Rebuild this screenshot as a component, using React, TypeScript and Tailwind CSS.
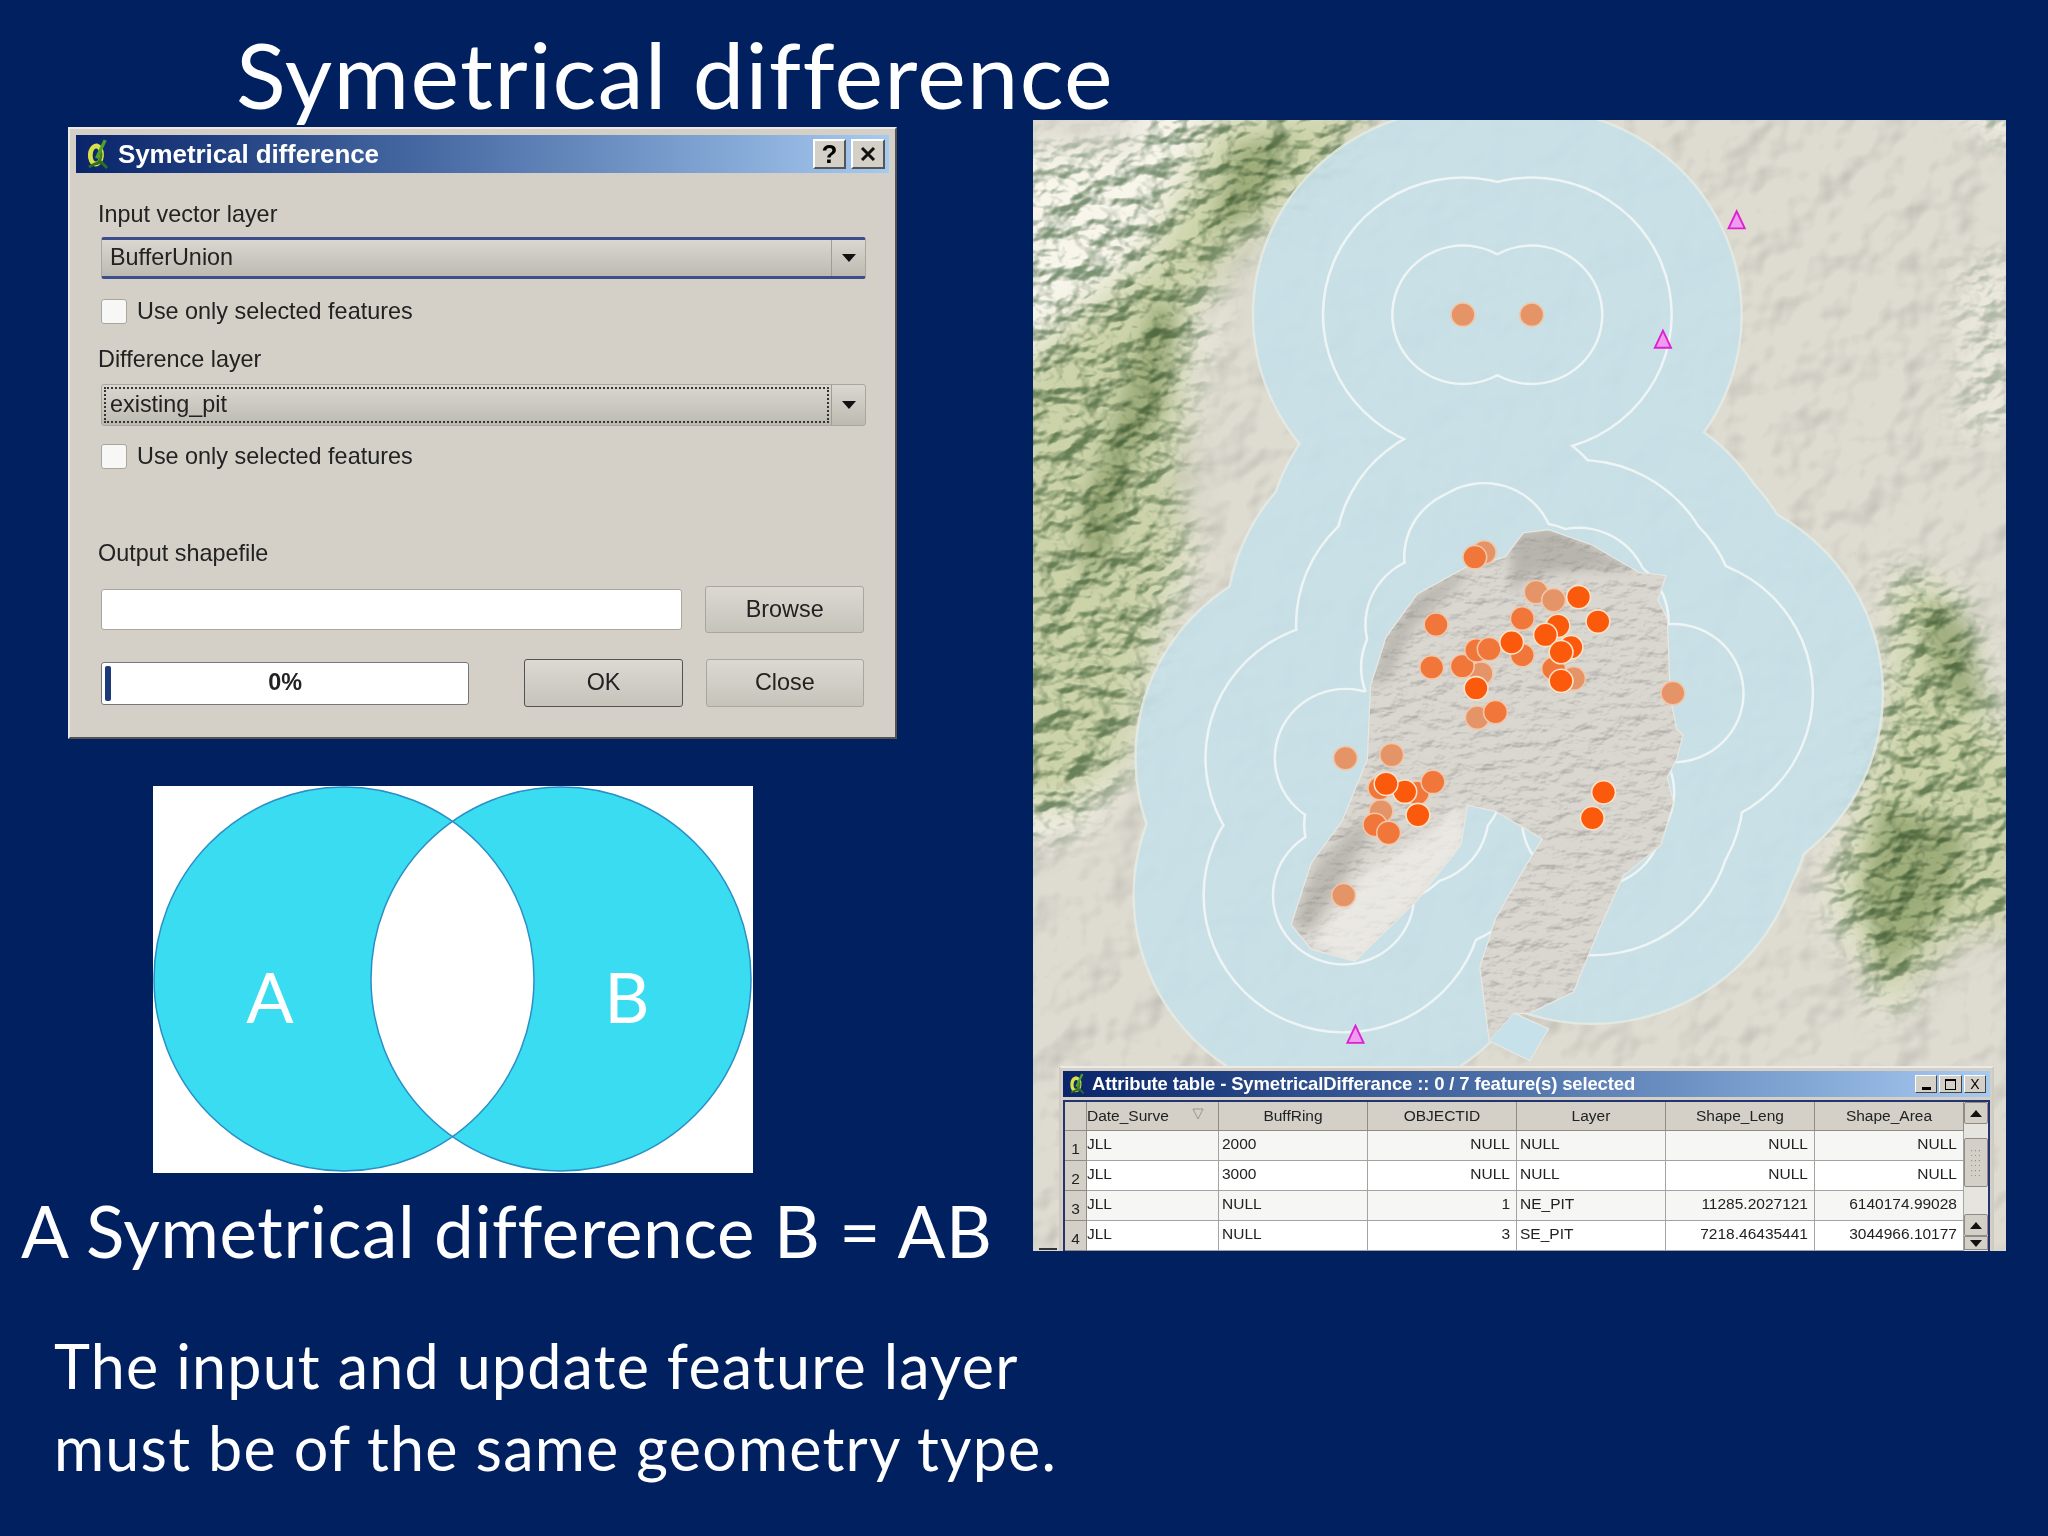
const dots: [number, number, number][] = [
  [693, 334, 0], [803, 334, 0], [727, 722, 0], [712, 730, 1], [810, 787, 0], [838, 800, 0],
  [1029, 952, 0], [505, 1058, 0], [579, 1053, 0], [502, 1282, 0], [562, 1145, 0], [716, 992, 0],
  [722, 920, 0], [650, 840, 1], [643, 910, 1], [692, 908, 1], [715, 882, 1], [735, 880, 1],
  [788, 830, 1], [788, 890, 1], [838, 912, 1], [870, 928, 0], [745, 983, 1], [560, 1107, 1],
  [620, 1115, 1], [552, 1167, 1], [574, 1180, 1], [645, 1097, 1], [878, 795, 2], [909, 835, 2],
  [845, 842, 2], [825, 857, 2], [771, 869, 2], [866, 877, 2], [850, 885, 2], [850, 932, 2],
  [714, 944, 2], [600, 1113, 2], [570, 1100, 2], [621, 1151, 2], [918, 1114, 2], [900, 1156, 2],
];

const PIT =
  "M790 690 L830 685 L900 710 L975 755 L1018 760 L1005 800 L1020 830 L1025 960 L1035 1010 L1045 1020 L1035 1060 L1020 1090 L1030 1130 L1010 1200 L950 1250 L910 1340 L870 1440 L800 1475 L775 1475 L735 1520 L720 1400 L745 1320 L790 1240 L820 1190 L745 1145 L700 1135 L690 1200 L620 1290 L520 1390 L450 1370 L418 1330 L450 1230 L500 1160 L540 1060 L545 940 L570 860 L620 790 L700 745 L760 730 Z";

const rows = [
  ["JLL", "2000", "NULL", "NULL", "NULL", "NULL"],
  ["JLL", "3000", "NULL", "NULL", "NULL", "NULL"],
  ["JLL", "NULL", "1", "NE_PIT", "11285.2027121", "6140174.99028"],
  ["JLL", "NULL", "3", "SE_PIT", "7218.46435441", "3044966.10177"],
];
const headers = ["Date_Surve", "BuffRing", "OBJECTID", "Layer", "Shape_Leng", "Shape_Area"];
const rightAligned = [false, false, true, false, true, true];

function QgisIcon({ className }: { className: string }) {
  return (
    <svg viewBox="0 0 24 32" className={className}>
      <path d="M11 7 C3 8 2 24 10 26 C17 26 19 9 11 7 Z" fill="none" stroke="#d9e04a" strokeWidth="5" />
      <path d="M15 12 C17 17 15 23 11 26" fill="none" stroke="#3d7d24" strokeWidth="3" />
      <path d="M20 1 L11 20" stroke="#4f9f2c" strokeWidth="3.5" />
      <path d="M3 29 L9 26 L16 24 L22 30" fill="none" stroke="#2f6e1e" strokeWidth="3" />
    </svg>
  );
}

function Arrow() {
  return (
    <svg viewBox="0 0 14 8" className="w-[14px] h-[8px]">
      <polygon points="0,0 14,0 7,8" fill="#111" />
    </svg>
  );
}

function CloseMark({ className }: { className: string }) {
  return (
    <svg viewBox="0 0 16 14" className={className}>
      <path d="M2 1 L14 13 M14 1 L2 13" stroke="#111" strokeWidth="3" />
    </svg>
  );
}

function Combo({ text, focus, hot }: { text: string; focus?: boolean; hot?: boolean }) {
  return (
    <div
      className={`h-[42px] w-[765px] flex rounded-[3px] border bg-gradient-to-b from-[#dad7d0] to-[#bdbab2] ${
        hot ? "border-[#a9a69e] border-y-[3px] border-y-[#3d4c8c]" : "border-[#a9a69e]"
      }`}
    >
      <div className="flex-1 p-[2px] flex">
        <div
          className={`flex-1 flex items-center pl-[4px] ${focus ? "border-2 border-dotted border-[#333]" : "pl-[6px]"}`}
        >
          {text}
        </div>
      </div>
      <div className="w-[34px] border-l border-[#a09d95] flex items-center justify-center">
        <Arrow />
      </div>
    </div>
  );
}

function Check({ label }: { label: string }) {
  return (
    <div className="flex items-center h-[25px] gap-[10px]">
      <div className="w-[26px] h-[25px] bg-[#f7f7f5] border border-[#a9a69e] rounded-[3px]" />
      <span>{label}</span>
    </div>
  );
}

function Btn({ text, dark, className }: { text: string; dark?: boolean; className?: string }) {
  return (
    <div
      className={`w-[159px] flex items-center justify-center rounded-[3px] border bg-gradient-to-b from-[#dcd9d2] to-[#c6c3bb] ${
        dark ? "border-[#55534f]" : "border-[#a9a69e]"
      } ${className ?? ""}`}
    >
      {text}
    </div>
  );
}

function Dialog() {
  return (
    <div className="w-[829px] h-[612px] bg-[#d4d0c8] border-2 border-t-[#eceae4] border-l-[#eceae4] border-r-[#55534f] border-b-[#55534f] blur-[0.5px] font-['Liberation_Sans',sans-serif] text-[23.4px] text-[#222] flex flex-col">
      <div className="mx-[6px] mt-[6px] h-[38px] flex items-center bg-gradient-to-r from-[#0a246a] to-[#a6caf0] pl-[10px] pr-[4px]">
        <QgisIcon className="w-[23px] h-[31px]" />
        <span className="ml-[9px] text-white font-bold text-[26px] tracking-[-0.1px] flex-1">Symetrical difference</span>
        <div className="w-[33px] h-[30px] bg-[#d4d0c8] border-2 border-b-[#555] border-r-[#555] border-t-white border-l-white flex items-center justify-center font-bold text-[26px] text-black">
          ?
        </div>
        <div className="ml-[5px] w-[34px] h-[30px] bg-[#d4d0c8] border-2 border-b-[#555] border-r-[#555] border-t-white border-l-white flex items-center justify-center">
          <CloseMark className="w-[16px] h-[14px]" />
        </div>
      </div>
      <div className="px-[31px] flex flex-col">
        <div className="mt-[27px] h-[30px] flex items-center -ml-[3px]">Input vector layer</div>
        <div className="mt-[7px]">
          <Combo text="BufferUnion" hot />
        </div>
        <div className="mt-[20px]">
          <Check label="Use only selected features" />
        </div>
        <div className="mt-[21px] h-[30px] flex items-center -ml-[3px]">Difference layer</div>
        <div className="mt-[9px]">
          <Combo text="existing_pit" focus />
        </div>
        <div className="mt-[18px]">
          <Check label="Use only selected features" />
        </div>
        <div className="mt-[70px] h-[30px] flex items-center -ml-[3px]">Output shapefile</div>
        <div className="mt-[17px] h-[47px] flex items-center gap-[23px]">
          <div className="w-[583px] h-[41px] bg-white border border-[#a9a69e] rounded-[3px]" />
          <Btn text="Browse" className="h-[47px]" />
        </div>
        <div className="mt-[26px] h-[48px] flex items-center">
          <div className="w-[370px] h-[43px] bg-white border border-[#777] rounded-[3px] relative flex items-center justify-center font-bold">
            <div className="absolute left-[3px] top-[3px] bottom-[3px] w-[6px] bg-[#1c3a7a] rounded-[2px]" />
            0%
          </div>
          <Btn text="OK" dark className="ml-[55px] h-[48px]" />
          <Btn text="Close" className="ml-[23px] h-[48px]" />
        </div>
      </div>
    </div>
  );
}

function Venn() {
  return (
    <svg viewBox="0 0 600 387" className="w-[600px] h-[387px] bg-white block">
      <defs>
        <clipPath id="vennA">
          <ellipse cx="191" cy="193" rx="190" ry="192" />
        </clipPath>
      </defs>
      <ellipse cx="191" cy="193" rx="190" ry="192" fill="#39dcf0" />
      <ellipse cx="408" cy="193" rx="190" ry="192" fill="#39dcf0" />
      <ellipse cx="408" cy="193" rx="190" ry="192" fill="#fff" clipPath="url(#vennA)" />
      <ellipse cx="191" cy="193" rx="190" ry="192" fill="none" stroke="#2a8fc6" strokeWidth="1.5" />
      <ellipse cx="408" cy="193" rx="190" ry="192" fill="none" stroke="#2a8fc6" strokeWidth="1.5" />
      <text x="117" y="237" textAnchor="middle" fill="#fff" fontFamily="Lato, sans-serif" fontSize="70">
        A
      </text>
      <text x="474" y="237" textAnchor="middle" fill="#fff" fontFamily="Lato, sans-serif" fontSize="70">
        B
      </text>
    </svg>
  );
}

function MapDrawing() {
  return (
    <svg viewBox="5 16 1557 1847" preserveAspectRatio="none" className="w-full h-full block">
      <defs>
        <filter id="soft" x="0" y="0" width="100%" height="100%" colorInterpolationFilters="sRGB">
          <feTurbulence type="fractalNoise" baseFrequency="0.012" numOctaves="3" seed="7" />
          <feGaussianBlur stdDeviation="2" />
          <feDiffuseLighting surfaceScale="3" diffuseConstant="1.3" lightingColor="#fff">
            <feDistantLight azimuth="225" elevation="50" />
          </feDiffuseLighting>
        </filter>
        <filter id="ridge" x="0" y="0" width="100%" height="100%" colorInterpolationFilters="sRGB">
          <feTurbulence type="fractalNoise" baseFrequency="0.02 0.03" numOctaves="4" seed="12" />
          <feGaussianBlur stdDeviation="1.6" />
          <feDiffuseLighting surfaceScale="24" diffuseConstant="1.14" lightingColor="#fff">
            <feDistantLight azimuth="225" elevation="50" />
          </feDiffuseLighting>
          <feComponentTransfer>
            <feFuncR type="table" tableValues="0.5 1" />
            <feFuncG type="table" tableValues="0.6 1" />
            <feFuncB type="table" tableValues="0.5 1" />
          </feComponentTransfer>
        </filter>
        <filter id="rock" x="0" y="0" width="100%" height="100%" colorInterpolationFilters="sRGB">
          <feTurbulence type="fractalNoise" baseFrequency="0.03 0.055" numOctaves="4" seed="3" />
          <feGaussianBlur stdDeviation="0.7" />
          <feDiffuseLighting surfaceScale="3.2" diffuseConstant="1.3" lightingColor="#fff">
            <feDistantLight azimuth="235" elevation="50" />
          </feDiffuseLighting>
          <feComponentTransfer>
            <feFuncR type="table" tableValues="0.55 1" />
            <feFuncG type="table" tableValues="0.55 1" />
            <feFuncB type="table" tableValues="0.55 1" />
          </feComponentTransfer>
        </filter>
        <filter id="blurMask">
          <feGaussianBlur stdDeviation="28" />
        </filter>
        <filter id="blurSoft">
          <feGaussianBlur stdDeviation="14" />
        </filter>
        <filter id="blurPit">
          <feGaussianBlur stdDeviation="9" />
        </filter>
        <mask id="hills">
          <g fill="#fff" filter="url(#blurMask)">
            <polygon points="-40,60 200,60 300,300 260,450 230,650 270,720 210,900 170,1050 90,1170 -40,1210" />
            <polygon points="180,-20 570,-20 480,110 360,210 250,300 120,210" />
            <polygon points="1370,740 1490,780 1550,980 1600,1060 1600,1340 1490,1340 1370,1490 1270,1290 1310,1120 1370,900" />
            <polygon points="1470,-20 1600,-20 1600,70" />
            <polygon points="1480,250 1600,230 1600,520 1490,540" opacity="0.5" />
          </g>
        </mask>
        <mask id="greens">
          <g fill="#fff" filter="url(#blurMask)">
            <polygon points="300,10 570,-20 470,110 340,220 250,340 240,620 250,720 190,920 160,1060 60,1140 -40,1140 -40,440 70,340 190,240" />
            <polygon points="1390,760 1480,790 1530,980 1600,1080 1600,1340 1490,1340 1370,1470 1290,1280 1330,1120 1380,920" />
          </g>
        </mask>
        <clipPath id="pit">
          <path d={PIT} />
        </clipPath>
      </defs>

      <rect x="-45" y="-30" width="1660" height="1950" fill="#dedbd1" />
      <rect x="-45" y="-30" width="1660" height="1950" filter="url(#soft)" className="mix-blend-multiply" />
      <g mask="url(#hills)">
        <rect x="-45" y="-30" width="1660" height="1950" fill="#f8f5eb" />
        <rect x="-45" y="-30" width="1660" height="1950" filter="url(#ridge)" className="mix-blend-multiply" />
      </g>
      <g mask="url(#greens)" className="mix-blend-multiply">
        <rect x="-45" y="-30" width="1660" height="1950" fill="#d2dcb8" />
      </g>
      <g fill="#c6d2ba" filter="url(#blurSoft)" className="mix-blend-multiply">
        <polygon points="200,310 240,330 220,480 170,560 130,720 90,780 80,660 130,520" />
        <polygon points="330,60 420,40 360,170 290,200" />
        <polygon points="1430,800 1500,830 1530,980 1470,960 1440,880" />
        <polygon points="1360,1130 1500,1180 1470,1300 1370,1420 1330,1280" />
      </g>

      <g opacity="0.88">
        {dots.map(([x, y], i) => <circle key={`a${i}`} cx={x} cy={y} r={338} fill="#e4ebe6" />)}
        {dots.map(([x, y], i) => <circle key={`b${i}`} cx={x} cy={y} r={334} fill="#c6e1ea" />)}
        {dots.map(([x, y], i) => <circle key={`c${i}`} cx={x} cy={y} r={226} fill="#f2f9fb" />)}
        {dots.map(([x, y], i) => <circle key={`d${i}`} cx={x} cy={y} r={222} fill="#c6e1ea" />)}
        {dots.map(([x, y], i) => <circle key={`e${i}`} cx={x} cy={y} r={115} fill="#f2f9fb" />)}
        {dots.map(([x, y], i) => <circle key={`f${i}`} cx={x} cy={y} r={111} fill="#c6e1ea" />)}
      </g>

      <g clipPath="url(#pit)">
        <rect x="380" y="650" width="700" height="900" fill="#dad7d1" />
        <rect x="380" y="650" width="700" height="900" filter="url(#rock)" className="mix-blend-multiply" />
        <polygon points="450,1360 530,1250 640,1180 690,1130 700,1200 620,1290 520,1400" fill="#f2f0ec" opacity="0.7" filter="url(#blurPit)" />
        <polygon points="418,1330 460,1230 520,1170 560,1150 500,1260 450,1340" fill="#8f8c86" opacity="0.4" filter="url(#blurPit)" />
        <polygon points="770,690 840,680 970,750 880,750 800,760 770,790" fill="#8f8c86" opacity="0.45" filter="url(#blurPit)" />
        <polygon points="700,745 620,790 570,860 545,940 575,930 610,850 690,770" fill="#8f8c86" opacity="0.4" filter="url(#blurPit)" />
      </g>
      <path d={PIT} fill="none" stroke="#e8e7e2" strokeWidth="2" />
      <path d="M735 1520 L800 1552 L830 1500 L775 1475" fill="#c6e1ea" stroke="#e8e7e2" strokeWidth="2" />

      {dots.map(([x, y, k], i) => (
        <circle
          key={`p${i}`}
          cx={x}
          cy={y}
          r={19}
          fill={k === 2 ? "#fb5a0c" : k === 1 ? "#f0763a" : "#e59468"}
          stroke={k === 2 ? "#fde3c8" : "#f2c6a8"}
          strokeWidth="2.5"
        />
      ))}
      {[[1131, 180], [1013, 375], [521, 1510]].map(([x, y]) => (
        <polygon
          key={x}
          points={`${x},${y - 15} ${x + 13},${y + 13} ${x - 13},${y + 13}`}
          fill="#ee9cf0"
          stroke="#e01fd0"
          strokeWidth="3"
        />
      ))}
    </svg>
  );
}

function AttributeTable() {
  return (
    <div className="absolute left-[26px] top-[946px] w-[935px] h-[185px] overflow-hidden bg-[#d4d0c8] border-t-2 border-x-2 border-t-[#eceae4] border-x-[#cfcbc3] pt-[3px] px-[2px] blur-[0.4px] font-['Liberation_Sans',sans-serif] text-[15.5px] text-[#222]">
      <div className="h-[26px] flex items-center bg-gradient-to-r from-[#0a246a] to-[#a6caf0] pl-[6px] pr-[4px]">
        <QgisIcon className="w-[16px] h-[22px]" />
        <span className="ml-[7px] flex-1 text-white font-bold text-[18.5px] tracking-[-0.15px]">
          Attribute table - SymetricalDifferance :: 0 / 7 feature(s) selected
        </span>
        <div className="flex gap-[2px]">
          <div className="w-[22px] h-[18px] bg-[#d4d0c8] border border-b-[#444] border-r-[#444] border-t-white border-l-white flex items-end justify-center pb-[2px]">
            <div className="w-[9px] h-[3px] bg-black" />
          </div>
          <div className="w-[23px] h-[18px] bg-[#d4d0c8] border border-b-[#444] border-r-[#444] border-t-white border-l-white flex items-center justify-center">
            <div className="w-[11px] h-[11px] border border-t-2 border-black" />
          </div>
          <div className="w-[22px] h-[18px] bg-[#d4d0c8] border border-b-[#444] border-r-[#444] border-t-white border-l-white flex items-center justify-center text-[14px] text-black">
            X
          </div>
        </div>
      </div>
      <div className="mt-[3px] h-[155px] border-t-2 border-x-2 border-[#23356f] flex">
        <div className="flex-1 min-w-0 flex flex-col">
          <div className="h-[29px] shrink-0 flex bg-[#d4d0c8]">
            <div className="w-[22px] border-r border-b border-[#8f8c85]" />
            {headers.map((h, i) => (
              <div
                key={h}
                className={`${i === 0 ? "w-[132px] justify-start" : "w-[149px] justify-center"} relative flex items-center border-r border-b border-[#8f8c85]`}
              >
                {h}
                {i === 0 && (
                  <svg viewBox="0 0 12 12" className="absolute right-[14px] top-[6px] w-[12px] h-[12px]">
                    <polygon points="1,1 11,1 6,11" fill="none" stroke="#9a978f" />
                  </svg>
                )}
              </div>
            ))}
          </div>
          {rows.map((row, r) => (
            <div key={r} className={`h-[30px] shrink-0 flex ${r % 2 === 0 ? "bg-[#f6f6f5]" : "bg-white"}`}>
              <div className="w-[22px] bg-[#d4d0c8] border-r border-b border-[#8f8c85] flex items-end justify-center">
                {r + 1}
              </div>
              {row.map((c, i) => (
                <div
                  key={i}
                  className={`${i === 0 ? "w-[132px] pl-0" : "w-[149px] pl-[3px]"} pb-[4px] flex items-center border-r border-b border-[#a3a3a3] ${
                    rightAligned[i] ? "justify-end pr-[6px]" : "justify-start"
                  }`}
                >
                  {c}
                </div>
              ))}
            </div>
          ))}
        </div>
        <div className="w-[24px] shrink-0 bg-[#e6e4df] flex flex-col">
          <div className="h-[22px] flex items-center justify-center bg-[#d4d0c8] border border-[#8f8c85] rounded-[2px]">
            <svg viewBox="0 0 12 7" className="w-[12px] h-[7px]">
              <polygon points="0,7 12,7 6,0" fill="#111" />
            </svg>
          </div>
          <div className="mt-[14px] h-[49px] bg-[#d4d0c8] border border-[#8f8c85] rounded-[2px] flex items-center justify-center text-[10px] leading-[10px] text-[#8f8c85] tracking-[1px] text-center">
            :::
            <br />
            :::
            <br />
            :::
          </div>
          <div className="mt-[27px] h-[22px] flex items-center justify-center bg-[#d4d0c8] border border-[#8f8c85] rounded-[2px]">
            <svg viewBox="0 0 12 7" className="w-[12px] h-[7px]">
              <polygon points="0,7 12,7 6,0" fill="#111" />
            </svg>
          </div>
          <div className="h-[14px] flex items-center justify-center bg-[#d4d0c8] border border-[#8f8c85]">
            <svg viewBox="0 0 12 7" className="w-[12px] h-[7px]">
              <polygon points="0,0 12,0 6,7" fill="#111" />
            </svg>
          </div>
        </div>
      </div>
    </div>
  );
}

export default function App() {
  return (
    <div className="w-[2048px] h-[1536px] overflow-hidden bg-[#002060] text-white flex font-['Lato',sans-serif]">
      <div className="w-[1033px] shrink-0 flex flex-col">
        <h1 className="h-[127px] pl-[236px] pt-[24px] text-[92px] leading-[100px] tracking-[1.3px] font-normal whitespace-nowrap">
          Symetrical difference
        </h1>
        <div className="ml-[68px]">
          <Dialog />
        </div>
        <div className="ml-[153px] mt-[47px]">
          <Venn />
        </div>
        <div className="ml-[21px] mt-[13px] text-[71px] leading-[90px] tracking-[0.6px] whitespace-nowrap">
          A Symetrical difference B = AB
        </div>
        <div className="ml-[54px] mt-[49px] text-[61px] leading-[82px] tracking-[1.2px] whitespace-nowrap">
          <p>The input and update feature layer</p>
          <p>must be of the same geometry type.</p>
        </div>
      </div>
      <div className="pt-[120px]">
        <div className="relative w-[973px] h-[1131px] overflow-hidden">
          <MapDrawing />
          <AttributeTable />
          <div className="absolute left-[6px] bottom-[1px] w-[18px] h-[2px] bg-[#333]" />
        </div>
      </div>
    </div>
  );
}
